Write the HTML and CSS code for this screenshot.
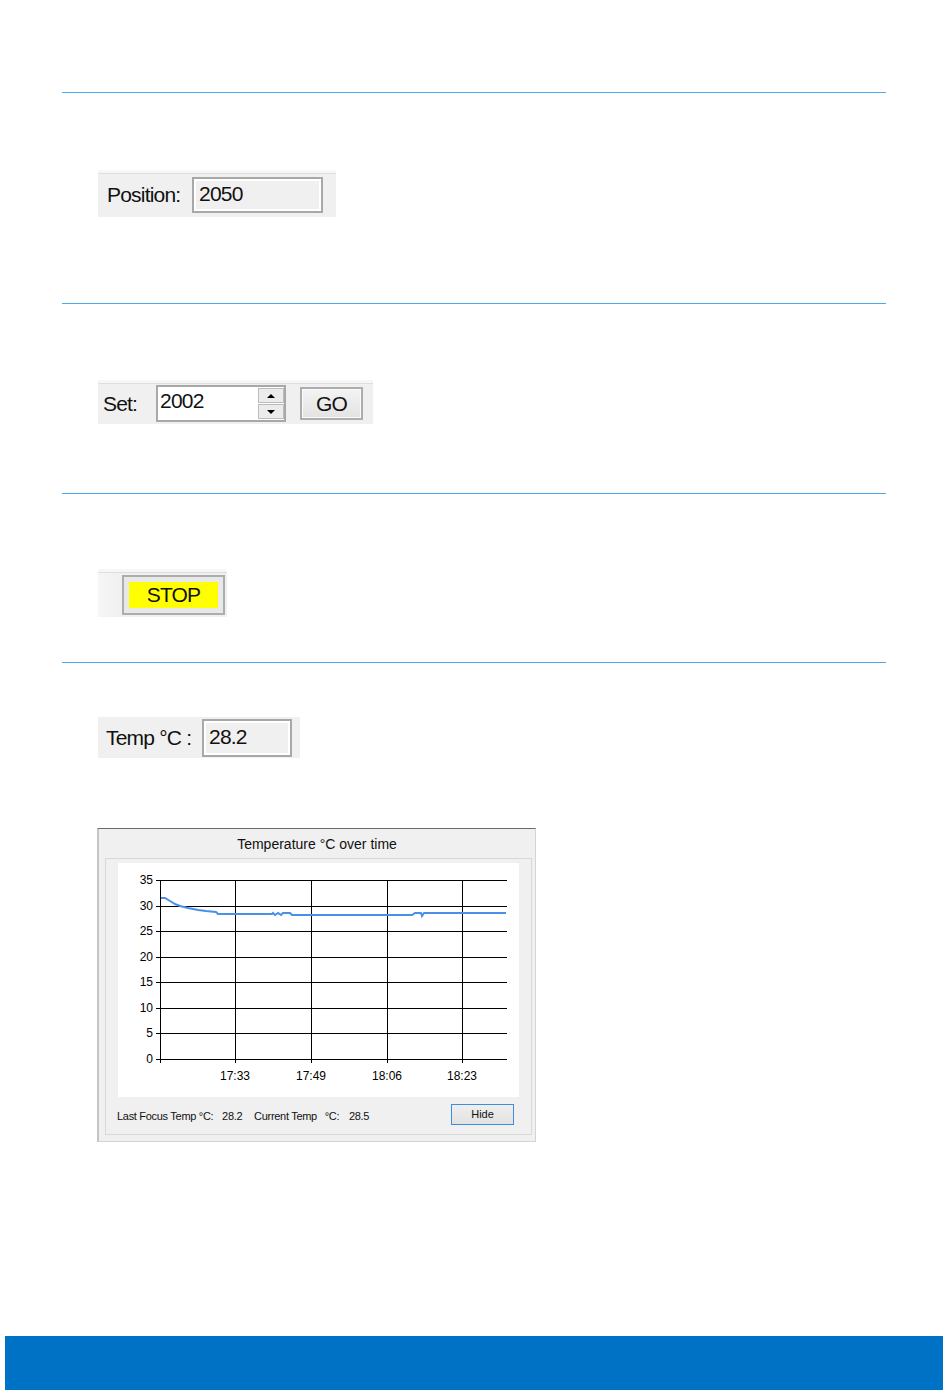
FILE: index.html
```html
<!DOCTYPE html>
<html lang="en">
<head>
    <meta charset="UTF-8">
    <title>Focuser control</title>
    <link rel="stylesheet" href="styles.css">
</head>
<body>
    <div class="page">
        <div class="section section-position">
            <div class="panel panel-position">
                <span class="label label-position">Position:</span>
                <div class="field field-position">2050</div>
            </div>
        </div>

        <div class="section section-set">
            <div class="panel panel-set">
                <span class="label label-set">Set:</span>
                <div class="spin">
                    <span class="spin-value">2002</span>
                    <div class="spin-buttons">
                        <span class="spin-up"><i class="arrow-up"></i></span>
                        <span class="spin-down"><i class="arrow-down"></i></span>
                    </div>
                </div>
                <div class="btn btn-go">GO</div>
            </div>
        </div>

        <div class="section section-stop">
            <div class="panel panel-stop">
                <div class="btn-stop"><span>STOP</span></div>
            </div>
        </div>

        <div class="section section-temp">
            <div class="panel panel-temp">
                <span class="label label-temp">Temp °C :</span>
                <div class="field field-temp">28.2</div>
            </div>

            <div class="chart">
                <div class="chart-title">Temperature °C over time</div>
                <div class="group">
                    <svg class="plot" width="401" height="234" viewBox="0 0 401 234">
                        <rect x="0" y="0" width="401" height="234" fill="#fff"/>
                        <g stroke="#000" stroke-width="1" shape-rendering="crispEdges">
                            <!-- horizontal grid -->
                            <line x1="38" y1="17.5" x2="389" y2="17.5"/>
                            <line x1="38" y1="43.5" x2="389" y2="43.5"/>
                            <line x1="38" y1="68.5" x2="389" y2="68.5"/>
                            <line x1="38" y1="94.5" x2="389" y2="94.5"/>
                            <line x1="38" y1="119.5" x2="389" y2="119.5"/>
                            <line x1="38" y1="145.5" x2="389" y2="145.5"/>
                            <line x1="38" y1="170.5" x2="389" y2="170.5"/>
                            <line x1="38" y1="196.5" x2="389" y2="196.5"/>
                            <!-- vertical grid -->
                            <line x1="42.5" y1="17" x2="42.5" y2="200"/>
                            <line x1="117.5" y1="17" x2="117.5" y2="200"/>
                            <line x1="193.5" y1="17" x2="193.5" y2="200"/>
                            <line x1="269.5" y1="17" x2="269.5" y2="200"/>
                            <line x1="344.5" y1="17" x2="344.5" y2="200"/>
                        </g>
                        <polyline fill="none" stroke="#4a8fe8" stroke-width="2" points="43,35 47,35 52,38 57,41 62,43 70,45 80,47 88,48 98,49 100,51 154,51 155,50 157,52 160,50 163,52 165,50 172,50 174,52 294,52 297,50 303,50 304,53 306,50 388,50"/>
                        <g class="axis-text" text-anchor="end">
                            <text x="35" y="21">35</text>
                            <text x="35" y="47">30</text>
                            <text x="35" y="72">25</text>
                            <text x="35" y="98">20</text>
                            <text x="35" y="123">15</text>
                            <text x="35" y="149">10</text>
                            <text x="35" y="174">5</text>
                            <text x="35" y="200">0</text>
                        </g>
                        <g class="axis-text" text-anchor="middle">
                            <text x="117" y="217">17:33</text>
                            <text x="193" y="217">17:49</text>
                            <text x="269" y="217">18:06</text>
                            <text x="344" y="217">18:23</text>
                        </g>
                    </svg>
                    <div class="chart-foot">
                        <div class="readings">
                            <span>Last Focus Temp °C:</span>
                            <span class="val-last">28.2</span>
                            <span class="cur-label">Current Temp</span>
                            <span class="cur-unit">°C:</span>
                            <span class="val-cur">28.5</span>
                        </div>
                        <div class="btn-hide">Hide</div>
                    </div>
                </div>
            </div>
        </div>
    </div>
    <div class="bottom-bar"></div>
</body>
</html>
```

FILE: styles.css
```css
*{
    margin: 0;
    padding: 0;
    box-sizing: border-box;
}
body{
    font-family: "Liberation Sans", Arial, sans-serif;
    color: #111;
    background: #fff;
}
.page{
    padding: 92px 64px 0 62px;
}
.section{
    border-top: 1px solid #4aaaf0;
}
.section-set{
    margin-top: 86px;
}
.section-stop{
    margin-top: 69px;
}
.section-temp{
    margin-top: 45px;
}

/* grey control strips */
.panel{
    display: flex;
    align-items: center;
    margin-left: 36px;
    background: #f0f0f0;
    border-top: 3px solid #f7f7f7;
    box-shadow: inset 0 1px 0 #dedede;
    font-size: 21px;
    letter-spacing: -0.8px;
}
.panel-position{
    width: 238px;
    height: 47px;
    margin-top: 77px;
    padding-left: 9px;
}
.label-position{
    width: 85px;
}
.field{
    border: 2px solid #a8a8a8;
    box-shadow: inset 0 0 0 2px #fff;
    background: #f0f0f0;
    padding-left: 5px;
    line-height: 30px;
}
.field-position{
    width: 131px;
    height: 36px;
}

.panel-set{
    width: 275px;
    height: 44px;
    margin-top: 76px;
    padding-left: 5px;
}
.label-set{
    width: 53px;
}
.spin{
    display: flex;
    width: 130px;
    height: 37px;
    border: 2px solid #a8a8a8;
    background: #fff;
}
.spin-value{
    flex: 1;
    padding-left: 2px;
    line-height: 28px;
}
.spin-buttons{
    display: flex;
    flex-direction: column;
    width: 26px;
    padding: 1px 0 1px 0;
    gap: 1px;
}
.spin-buttons span{
    flex: 1;
    display: flex;
    align-items: center;
    justify-content: center;
    background: #ececec;
    border: 1px solid #bcbcbc;
}
.arrow-up{
    width: 0;
    height: 0;
    border-left: 4px solid transparent;
    border-right: 4px solid transparent;
    border-bottom: 4px solid #000;
}
.arrow-down{
    width: 0;
    height: 0;
    border-left: 4px solid transparent;
    border-right: 4px solid transparent;
    border-top: 4px solid #000;
}
.btn{
    display: flex;
    align-items: center;
    justify-content: center;
    border: 2px solid #adadad;
    box-shadow: inset 0 0 0 1px #fbfbfb;
    background: linear-gradient(#f3f3f3, #e3e3e3);
}
.btn-go{
    width: 63px;
    height: 33px;
    margin-left: 14px;
}

.panel-stop{
    width: 129px;
    height: 48px;
    margin-top: 75px;
    padding-left: 24px;
    background: linear-gradient(90deg, #f6f6f6 0, #f0f0f0 24px);
}
.btn-stop{
    width: 103px;
    height: 40px;
    border: 2px solid #adadad;
    background: #e8e8e8;
    padding: 5px 5px;
}
.btn-stop span{
    display: flex;
    align-items: center;
    justify-content: center;
    height: 100%;
    background: #ffff00;
}

.panel-temp{
    width: 202px;
    height: 41px;
    margin-top: 54px;
    padding-left: 8px;
    border-top: 0;
    box-shadow: none;
}
.label-temp{
    width: 96px;
}
.field-temp{
    width: 90px;
    height: 38px;
    line-height: 32px;
}

/* chart window */
.chart{
    width: 439px;
    height: 314px;
    margin: 70px 0 0 35px;
    background: #f0f0f0;
    border: 1px solid #d4d4d4;
    border-top-color: #6a6a6a;
    border-left: 2px solid #c4c4c4;
}
.chart-title{
    height: 29px;
    padding-top: 2px;
    line-height: 27px;
    text-align: center;
    font-size: 14px;
}
.group{
    width: 427px;
    height: 277px;
    margin-left: 6px;
    border: 1px solid #d8d8d8;
    padding: 4px 12px 0;
}
.plot{
    display: block;
}
.axis-text{
    font-family: "Liberation Sans", Arial, sans-serif;
    font-size: 12px;
    fill: #000;
}
.chart-foot{
    display: flex;
    align-items: center;
    justify-content: space-between;
    height: 37px;
    padding-right: 5px;
    font-size: 11px;
    letter-spacing: -0.3px;
}
.readings{
    margin-left: -1px;
    padding-top: 0;
}
.val-last{
    margin-left: 6px;
}
.cur-label{
    margin-left: 9px;
}
.cur-unit{
    margin-left: 5px;
}
.val-cur{
    margin-left: 7px;
}
.btn-hide{
    width: 63px;
    height: 21px;
    margin-top: -2px;
    border: 1px solid #3c8fe0;
    background: linear-gradient(#efefef, #e2e2e2);
    text-align: center;
    line-height: 19px;
    letter-spacing: 0;
}

.bottom-bar{
    height: 54px;
    margin: 194px 7px 0 5px;
    background: #0072c6;
}
```
